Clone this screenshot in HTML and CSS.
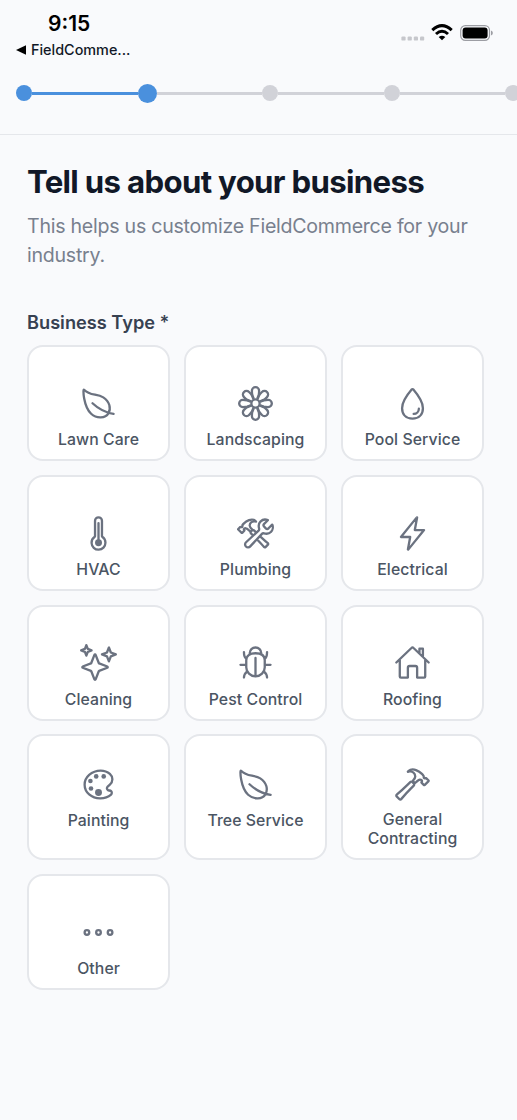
FILE: index.html
```html
<!DOCTYPE html>
<html lang="en">
<head>
<meta charset="utf-8">
<title>Tell us about your business</title>
<link rel="stylesheet" href="styles.css">
</head>
<body>
<header class="status">
  <div class="status-left">
    <div class="time">9:15</div>
    <div class="back"><svg class="back-arrow" viewBox="0 0 10 10"><path d="M0 5L10 0.3V9.7Z"/></svg><span>FieldComme...</span></div>
  </div>
  <div class="status-right">
    <svg class="cell" viewBox="0 0 24 5"><rect x="0.4" y="0.4" width="4.2" height="4.2" rx="1.2"/><rect x="6.6" y="0.4" width="4.2" height="4.2" rx="1.2"/><rect x="12.8" y="0.4" width="4.2" height="4.2" rx="1.2"/><rect x="19" y="0.4" width="4.2" height="4.2" rx="1.2"/></svg>
    <svg class="wifi" viewBox="0 0 22 17"><path d="M1.3 6.1Q11-2.9 20.7 6.1M5 10Q11 4.5 17 10" fill="none" stroke="#000" stroke-width="3"/><path d="M7.7 13Q11 10.5 14.3 13L11 16.3Z"/></svg>
    <svg class="battery" viewBox="0 0 34 16"><rect x="0.7" y="0.7" width="28.8" height="14.6" rx="4.6" fill="none" stroke="#9c9da3" stroke-width="1.2"/><rect x="2.6" y="2.6" width="25" height="10.8" rx="3"/><path d="M31 5.6Q32.9 6.2 32.9 8T31 10.4Z" fill="#9c9da3"/></svg>
  </div>
</header>
<nav class="steps">
  <i class="dot done"></i><i class="line done"></i><i class="dot current"></i><i class="line"></i><i class="dot"></i><i class="line"></i><i class="dot"></i><i class="line"></i><i class="dot"></i>
</nav>
<main class="content">
  <h1 class="title">Tell us about your business</h1>
  <p class="subtitle">This helps us customize FieldCommerce for your industry.</p>
  <h2 class="label">Business Type *</h2>
  <div class="grid">
    <div class="card"><svg class="icon" viewBox="0 0 512 512"><path d="M321.89 171.42C233 114 141 155.22 56 65.22c-19.8-21-8.3 235.5 98.1 332.7 77.79 71 197.9 63.08 238.4-5.92s18.28-163.17-70.61-220.58zM173 253c86 81 175 129 292 147"/></svg><span class="name">Lawn Care</span></div>
    <div class="card"><svg class="icon" viewBox="0 0 512 512"><defs><path id="petal" d="M229 182L212 142C207 126 206 100 206 80a50 50 0 01100 0C306 100 305 126 300 142L283 182"/></defs><circle cx="256" cy="256" r="57"/><use href="#petal"/><use href="#petal" transform="rotate(45 256 256)"/><use href="#petal" transform="rotate(90 256 256)"/><use href="#petal" transform="rotate(135 256 256)"/><use href="#petal" transform="rotate(180 256 256)"/><use href="#petal" transform="rotate(225 256 256)"/><use href="#petal" transform="rotate(270 256 256)"/><use href="#petal" transform="rotate(315 256 256)"/></svg><span class="name">Landscaping</span></div>
    <div class="card"><svg class="icon" viewBox="0 0 512 512"><path d="M400 320c0 88.37-55.63 144-144 144s-144-55.63-144-144c0-94.83 103.23-222.85 134.89-259.88a12 12 0 0118.23 0C296.77 97.15 400 225.17 400 320zM344 328a72 72 0 01-72 72"/></svg><span class="name">Pool Service</span></div>
    <div class="card"><svg class="icon" viewBox="0 0 512 512"><path d="M307.72 302.27a8 8 0 01-3.72-6.75V80a48 48 0 00-48-48h0a48 48 0 00-48 48v215.52a8 8 0 01-3.71 6.74 97.51 97.51 0 00-44.19 86.07A96 96 0 00352 384a97.49 97.49 0 00-44.28-81.73zM256 112v272"/><circle class="solid" cx="256" cy="384" r="48"/></svg><span class="name">HVAC</span></div>
    <div class="card"><svg class="icon" viewBox="0 0 512 512"><path d="M436.67 184.11a27.17 27.17 0 01-38.3 0l-22.48-22.49a27.15 27.15 0 010-38.29l50.89-50.89a.85.85 0 00-.26-1.38C393.68 57.57 351.09 64.15 324.05 91c-25.88 25.69-27.35 64.27-17.87 98a27 27 0 01-7.67 27.14l-173 160.76a40.76 40.76 0 1057.57 57.54l162.15-173.3A27 27 0 01372 253.6c33.46 8.94 71.96 7.26 97.07-17.94 27.49-27.61 33.38-74.4 18.92-102.32a.85.85 0 00-1.36-.22zM224 284c-17.48-17-25.49-24.91-31-30.29a18.24 18.24 0 01-3.33-21.35 20.76 20.76 0 013.5-4.62l15.68-15.29a18.66 18.66 0 015.63-3.87 18.11 18.11 0 0120 3.62c5.45 5.29 15.43 15 33.41 32.52M317.07 291.3c40.95 38.1 90.62 83.27 110 99.41a13.46 13.46 0 01.94 19.92L394.63 444a14 14 0 01-20.29-.76c-16.53-19.18-61.09-67.11-99.27-107M17.34 193.5l29.41-28.74a4.71 4.71 0 013.41-1.35 4.85 4.85 0 013.41 1.35h0a9.86 9.86 0 008.19 2.77c3.83-.42 7.92-1.6 10.57-4.12 6-5.8-.94-17.23 4.34-24.54a207 207 0 0119.78-22.6c6-5.88 29.84-28.32 69.9-44.45A107.31 107.31 0 01206.67 64c22.59 0 40 10 46.26 15.67a89.54 89.54 0 0110.28 11.64A78.92 78.92 0 00254 88.54a68.67 68.67 0 00-20-1.28c-13.33 1.09-29.41 7.26-38 14-13.9 11-19.87 25.72-20.81 44.71-.68 14.12 2.72 22.1 36.1 55.49a6.6 6.6 0 01-.34 9.16l-18.22 18a6.88 6.88 0 01-9.54.09c-21.94-21.94-36.65-33.09-45-38.16s-15.07-6.5-18.3-6.85a30.85 30.85 0 00-18.27 3.87 11.39 11.39 0 00-2.64 2 14.14 14.14 0 00.42 20.08l1.71 1.6a4.63 4.63 0 010 6.64L71.73 246.6a4.71 4.71 0 01-3.41 1.4 4.86 4.86 0 01-3.41-1.35L17.34 200.22a4.88 4.88 0 010-6.72z"/></svg><span class="name">Plumbing</span></div>
    <div class="card"><svg class="icon" viewBox="0 0 512 512"><path d="M315.27 33L96 304h128l-31.51 173.23a2.36 2.36 0 002.33 2.77h0a2.36 2.36 0 001.89-.95L416 208H288l31.66-173.25a2.45 2.45 0 00-2.44-2.75h0a2.42 2.42 0 00-1.95 1z"/></svg><span class="name">Electrical</span></div>
    <div class="card"><svg class="icon" viewBox="0 0 512 512"><path d="M259.92 262.91L216.4 149.77a9 9 0 00-16.8 0l-43.52 113.14a9 9 0 01-5.17 5.17L37.77 311.6a9 9 0 000 16.8l113.14 43.52a9 9 0 015.17 5.17l43.52 113.14a9 9 0 0016.8 0l43.52-113.14a9 9 0 015.17-5.17l113.14-43.52a9 9 0 000-16.8l-113.14-43.52a9 9 0 01-5.17-5.17zM108 68L88 16 68 68 16 88l52 20 20 52 20-52 52-20-52-20zM426.67 117.33L400 48l-26.67 69.33L304 144l69.33 26.67L400 240l26.67-69.33L496 144l-69.33-26.67z"/></svg><span class="name">Cleaning</span></div>
    <div class="card"><svg class="icon" viewBox="0 0 512 512"><path d="M370 378c28.89 23.52 46 46.07 46 86M142 378c-28.89 23.52-46 46.06-46 86M384 208c28.89-23.52 32-56.07 32-96M128 206c-28.89-23.52-32-54.06-32-94M464 288.13h-80M128 288.13H48M256 192v256M256 448h0c-70.4 0-128-57.6-128-128v-96.07c0-65.07 57.6-96 128-96h0c70.4 0 128 25.6 128 96V320c0 70.4-57.6 128-128 128zM179.43 143.52a49.08 49.08 0 01-3.43-15.73A80 80 0 01255.79 48h.42A80 80 0 01336 127.79a41.91 41.91 0 01-3.12 14.3"/></svg><span class="name">Pest Control</span></div>
    <div class="card"><svg class="icon" viewBox="0 0 512 512"><path d="M80 212v236a16 16 0 0016 16h96V328a24 24 0 0124-24h80a24 24 0 0124 24v136h96a16 16 0 0016-16V212M480 256L266.89 52c-5-5.28-16.69-5.34-21.78 0L32 256M400 179V64h-48v69"/></svg><span class="name">Roofing</span></div>
    <div class="card"><svg class="icon" viewBox="0 0 512 512"><path d="M430.11 347.9c-6.6-6.1-16.3-7.6-24.6-9-11.5-1.9-15.9-4-22.6-10-14.3-12.7-14.3-31.1 0-43.8l30.3-26.9c46.4-41 46.4-108.2 0-149.2-34.2-30.1-80.1-45-127.8-45-55.7 0-113.9 20.3-158.8 60.1-83.5 73.8-83.5 194.7 0 268.5 41.5 36.7 97.5 55 152.9 55.4h1.7c55.4 0 110-17.9 148.8-52.4 14.4-12.7 11.99-36.6.1-47.7z"/><circle class="solid" cx="144" cy="208" r="32"/><circle class="solid" cx="152" cy="311" r="32"/><circle class="solid" cx="224" cy="144" r="32"/><circle class="solid" cx="256" cy="367" r="48"/><circle class="solid" cx="328" cy="144" r="32"/></svg><span class="name">Painting</span></div>
    <div class="card"><svg class="icon" viewBox="0 0 512 512"><path d="M321.89 171.42C233 114 141 155.22 56 65.22c-19.8-21-8.3 235.5 98.1 332.7 77.79 71 197.9 63.08 238.4-5.92s18.28-163.17-70.61-220.58zM173 253c86 81 175 129 292 147"/></svg><span class="name">Tree Service</span></div>
    <div class="card"><svg class="icon" viewBox="0 0 512 512"><path d="M277.42 247a24.68 24.68 0 00-4.08-5.47L255 223.44a21.63 21.63 0 00-6.56-4.57 20.93 20.93 0 00-23.28 4.27c-6.36 6.26-18 17.68-39 38.43C146 301.3 71.43 367.89 37.71 396.29a16 16 0 00-1.09 23.54l39 39.43a16.13 16.13 0 0023.67-.89c29.24-34.37 96.3-109 136-148.23 20.39-20.06 31.82-31.58 38.29-37.94a21.76 21.76 0 003.84-25.2zM478.43 201l-34.31-34a5.44 5.44 0 00-4-1.59 5.59 5.59 0 00-4 1.59h0a11.41 11.41 0 01-9.55 3.27c-4.48-.49-9.25-1.88-12.33-4.86-7-6.86 1.09-20.36-5.07-29a242.88 242.88 0 00-23.08-26.72c-7.06-7-34.81-33.47-81.55-52.53a123.79 123.79 0 00-47-9.24c-26.35 0-46.61 11.76-54 18.51-5.88 5.32-12 13.77-12 13.77a91.29 91.29 0 0110.81-3.2 79.53 79.53 0 0123.28-1.49C241.19 76.8 259.94 84.1 270 92c16.21 13 23.18 30.39 24.27 52.83.8 16.69-15.23 37.76-30.44 54.94a7.85 7.85 0 00.4 10.83l21.24 21.23a8 8 0 0011.14.1c13.93-13.51 31.09-28.47 40.82-34.46s17.58-7.68 21.35-8.09a35.71 35.71 0 0121.3 4.62 13.65 13.65 0 013.08 2.38c6.46 6.56 6.07 17.28-.5 23.74l-2 1.89a5.5 5.5 0 000 7.84l34.31 34a5.5 5.5 0 004 1.58 5.65 5.65 0 004-1.58L478.43 209a5.82 5.82 0 000-8z"/></svg><span class="name two">General<br>Contracting</span></div>
    <div class="card"><svg class="icon" viewBox="0 0 512 512"><circle cx="96" cy="256" r="32"/><circle cx="256" cy="256" r="32"/><circle cx="416" cy="256" r="32"/></svg><span class="name">Other</span></div>
  </div>
</main>
</body>
</html>
```
FILE: styles.css
```css
* { box-sizing: border-box; }
body {
  margin: 0;
  height: 1120px;
  overflow: hidden;
  background: #f9fafc;
  font-family: Inter, "Liberation Sans", sans-serif;
  color: #111827;
}
.status {
  display: flex;
  justify-content: space-between;
  height: 74px;
  padding: 12px 23.5px 0 16px;
}
.time {
  padding-left: 32px;
  font-size: 21px;
  line-height: 24px;
  font-weight: 600;
  color: #000;
}
.back {
  display: flex;
  align-items: center;
  gap: 5px;
  margin-top: 5px;
  font-size: 14.4px;
  line-height: 17px;
  font-weight: 500;
}
.back-arrow { width: 10px; height: 10px; }
.status-right { display: flex; align-items: flex-start; padding-top: 12px; }
.cell { width: 24px; height: 5px; margin-top: 12px; fill: #c6c7cc; }
.wifi { width: 22px; height: 17px; margin-left: 6px; }
.battery { width: 34px; height: 16px; margin: 1px 0 0 7px; }
.steps {
  display: flex;
  align-items: center;
  height: 61px;
  padding: 0 0 22px 16px;
  border-bottom: 1px solid #e5e7eb;
}
.dot { flex: none; width: 16px; height: 16px; border-radius: 50%; background: #d1d2d8; }
.line { flex: none; width: 105.6px; height: 3px; background: #d1d2d8; }
.done, .current { background: #4a90dd; }
.dot.current { width: 19px; height: 19px; }
.content { padding: 30px 27px 0; }
.title {
  margin: 0;
  font-size: 31.2px;
  line-height: 34px;
  font-weight: 700;
  letter-spacing: -0.68px;
  white-space: nowrap;
}
.subtitle {
  margin: 13px 0 0;
  font-size: 19.6px;
  line-height: 29px;
  letter-spacing: -0.26px;
  color: #78808e;
}
.label {
  margin: 40px 0 0;
  font-size: 18.2px;
  line-height: 24px;
  font-weight: 600;
  color: #374151;
}
.grid {
  display: grid;
  grid-template-columns: repeat(3, 143.1px);
  grid-template-rows: 116px 116px 116px 125.8px 116px;
  gap: 13.8px 13.9px;
  margin-top: 11px;
}
.card {
  display: flex;
  flex-direction: column;
  align-items: center;
  padding-top: 37.8px;
  border: 2px solid #e5e7eb;
  border-radius: 16px;
  background: #fff;
}
.card:nth-child(n+10):nth-child(-n+12) { padding-top: 29.2px; }
.icon {
  width: 37px;
  height: 37px;
  overflow: visible;
  fill: none;
  stroke: #6b7280;
  stroke-width: 32;
  stroke-linecap: round;
  stroke-linejoin: round;
}
.solid { fill: #6b7280; stroke: none; }
.name {
  margin-top: 8.3px;
  font-size: 15.8px;
  line-height: 19px;
  font-weight: 500;
  letter-spacing: 0.08px;
  color: #4b5563;
  text-align: center;
  white-space: nowrap;
}
.two { margin-top: 7.3px; }
```
